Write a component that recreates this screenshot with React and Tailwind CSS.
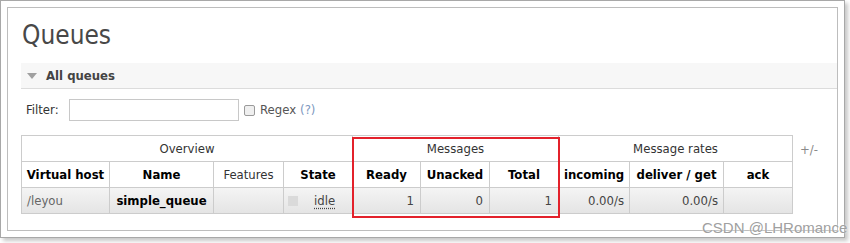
import React from "react";

const font = { fontFamily: "'DejaVu Sans Condensed', 'DejaVu Sans', Verdana, sans-serif" };

const cols = [88, 104, 70, 69, 68, 69, 69, 71, 94, 69];

const App = () => {
  return (
    <div className="relative w-[850px] h-[243px] bg-white overflow-hidden" style={font}>
      {/* outer frame */}
      <div className="w-[845px] h-[238px] border border-[#a8a8a8] shadow-[3px_3px_4px_rgba(0,0,0,0.22)] p-[6px]">
        <div className="h-full border border-[#bdbdbd] pl-[13px] pt-[12px]">
          <h1 className="text-[26px] leading-[30px] text-[#484848] font-normal ml-[1px] h-[43px]">Queues</h1>

          {/* section header */}
          <div className="h-[26px] bg-[#f7f7f7] border-b border-[#dcdcdc] flex items-center pl-[6px]">
            <span className="w-0 h-0 border-l-[5px] border-r-[5px] border-t-[6px] border-l-transparent border-r-transparent border-t-[#a0a0a0] mr-[9px] mt-[1px]"></span>
            <span className="text-[13px] font-bold text-[#444]">All queues</span>
          </div>

          {/* filter */}
          <div className="flex items-center h-[22px] mt-[10px] text-[13px] text-[#333]">
            <span className="ml-[5px] w-[43px]">Filter:</span>
            <div className="w-[170px] h-[22px] border border-[#c8c8c8] bg-white"></div>
            <span className="ml-[5px] w-[11px] h-[11px] rounded-[2px] border border-[#9a9a9a] bg-[#efefef]"></span>
            <span className="ml-[5px] text-[#555]">Regex</span>
            <span className="ml-[4px] text-[#7d97c0]">(?)</span>
          </div>

          {/* table */}
          <div className="flex mt-[14px]">
            <table className="border-collapse text-[13px] table-fixed" style={{ width: 772 }}>
              <colgroup>
                {cols.map((w, i) => (
                  <col key={i} style={{ width: w }} />
                ))}
              </colgroup>
              <thead>
                <tr className="h-[26px] text-[#333]">
                  <th colSpan={4} className="border border-[#cccccc] font-normal">Overview</th>
                  <th colSpan={3} className="border border-[#cccccc] font-normal">Messages</th>
                  <th colSpan={3} className="border border-[#cccccc] font-normal">Message rates</th>
                </tr>
                <tr className="h-[26px] text-black">
                  <th className="border border-[#cccccc] font-bold">Virtual host</th>
                  <th className="border border-[#cccccc] font-bold">Name</th>
                  <th className="border border-[#cccccc] font-normal text-[#333]">Features</th>
                  <th className="border border-[#cccccc] font-bold">State</th>
                  <th className="border border-[#cccccc] font-bold">Ready</th>
                  <th className="border border-[#cccccc] font-bold">Unacked</th>
                  <th className="border border-[#cccccc] font-bold">Total</th>
                  <th className="border border-[#cccccc] font-bold">incoming</th>
                  <th className="border border-[#cccccc] font-bold">deliver / get</th>
                  <th className="border border-[#cccccc] font-bold">ack</th>
                </tr>
              </thead>
              <tbody>
                <tr className="h-[26px] bg-gradient-to-b from-[#f4f4f4] to-[#e4e4e4] text-[#444]">
                  <td className="border border-[#cccccc] pl-[5px] text-[#666]">/leyou</td>
                  <td className="border border-[#cccccc] text-center font-bold text-black">simple_queue</td>
                  <td className="border border-[#cccccc]"></td>
                  <td className="border border-[#cccccc]">
                    <div className="flex items-center pl-[4px]">
                      <span className="w-[10px] h-[10px] bg-[#dadada]"></span>
                      <span className="ml-[16px] underline decoration-dotted underline-offset-[3px]">idle</span>
                    </div>
                  </td>
                  <td className="border border-[#cccccc] text-right pr-[6px]">1</td>
                  <td className="border border-[#cccccc] text-right pr-[6px]">0</td>
                  <td className="border border-[#cccccc] text-right pr-[6px]">1</td>
                  <td className="border border-[#cccccc] text-right pr-[5px]">0.00/s</td>
                  <td className="border border-[#cccccc] text-right pr-[5px]">0.00/s</td>
                  <td className="border border-[#cccccc]"></td>
                </tr>
              </tbody>
            </table>
            <span className="ml-[7px] mt-[5px] text-[13px] text-[#8a8a8a]">+/-</span>
          </div>
        </div>
      </div>

      {/* annotation box */}
      <div className="absolute left-[352px] top-[137px] w-[208px] h-[81px] border-2 border-[#e3212b]"></div>

      {/* watermark */}
      <span
        className="absolute left-[702px] top-[219px] text-[15px] text-[#a0a0a0] leading-[18px]"
        style={{ fontFamily: "'Liberation Sans', Arial, sans-serif", textShadow: "0 0 2px #fff" }}
      >
        CSDN @LHRomance
      </span>
    </div>
  );
};

export default App;
